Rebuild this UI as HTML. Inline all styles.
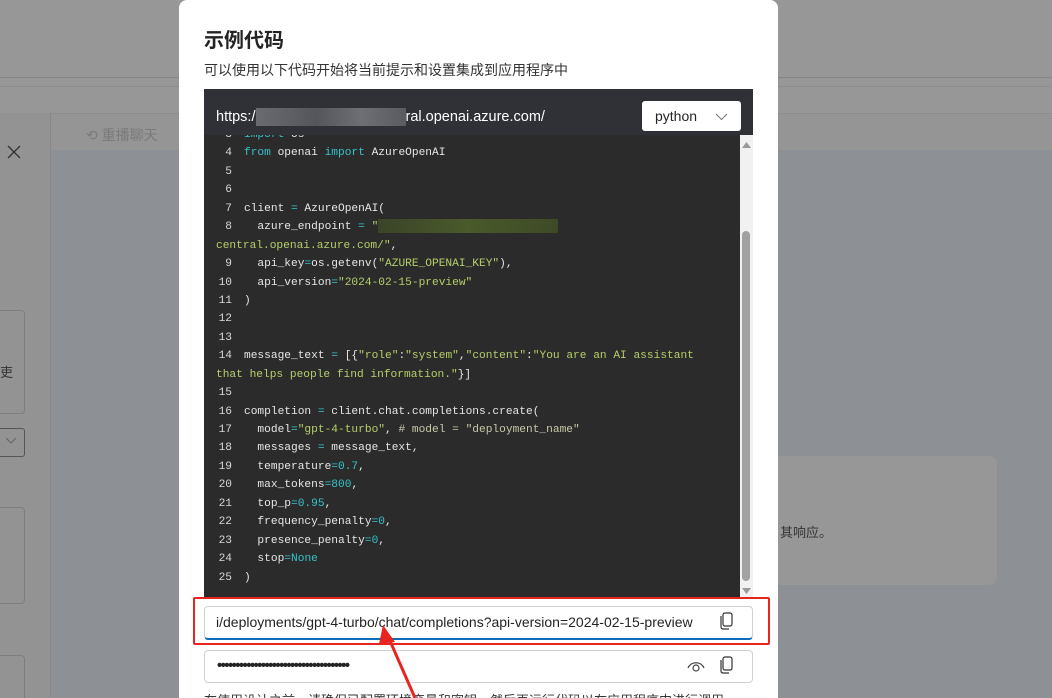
<!DOCTYPE html>
<html><head><meta charset="utf-8">
<style>
*{margin:0;padding:0;box-sizing:border-box}
html,body{width:1052px;height:698px;overflow:hidden}
body{position:relative;background:#8d9094;font-family:"Liberation Sans","Noto Sans CJK SC",sans-serif}
.abs{position:absolute}
.code{font-family:"Liberation Mono","DejaVu Sans Mono",monospace;font-size:11.2px;color:#e6e6e6;white-space:pre;line-height:18.43px}
.n{display:inline-block;width:16px;text-align:right;margin-right:12px;color:#d8d8d8}
.k{color:#36c2c9}.s{color:#b4cf6a}.c{color:#36c2c9}.cm{color:#c8c8a8}
</style></head><body>
<div class="abs" style="left:0;top:0;width:1052px;height:77px;background:#979797"></div>
<div class="abs" style="left:0;top:77px;width:1052px;height:1px;background:#858585"></div>
<div class="abs" style="left:0;top:78px;width:1052px;height:35px;background:#979797"></div>
<div class="abs" style="left:0;top:86px;width:1052px;height:1px;background:#8c8c8c"></div>
<div class="abs" style="left:0;top:113px;width:50px;height:585px;background:#939393"></div>
<div class="abs" style="left:50px;top:113px;width:1002px;height:37px;background:#959595;border-top:1px solid #8c8c8c"></div>
<div class="abs" style="left:50px;top:113px;width:1px;height:585px;background:#888"></div>
<div class="abs" style="left:86px;top:125px;font-size:14px;color:#7a7a7a">⟲ 重播聊天</div>
<svg class="abs" style="left:7px;top:145px" width="14" height="14"><path d="M1 1L13 13M13 1L1 13" stroke="#333" stroke-width="1.3"/></svg>
<div class="abs" style="left:-10px;top:310px;width:35px;height:104px;border:1px solid #7e7e7e;border-radius:4px"></div>
<div class="abs" style="left:0;top:362px;font-size:13px;color:#333">吏</div>
<div class="abs" style="left:-10px;top:428px;width:35px;height:29px;border:1px solid #555;border-radius:3px"></div>
<svg class="abs" style="left:5px;top:437px" width="12" height="8"><path d="M1 1L6 6L11 1" stroke="#666" fill="none"/></svg>
<div class="abs" style="left:-10px;top:507px;width:35px;height:97px;border:1px solid #7e7e7e;border-radius:4px"></div>
<div class="abs" style="left:-10px;top:655px;width:35px;height:60px;border:1px solid #7e7e7e;border-radius:4px"></div>
<div class="abs" style="left:760px;top:456px;width:237px;height:129px;background:#979797;border-radius:8px"></div>
<div class="abs" style="left:780px;top:522px;font-size:13px;color:#333">其响应。</div>
<!-- modal -->
<div class="abs" style="left:179px;top:0;width:599px;height:720px;background:#fff;border-radius:8px"></div>
<div class="abs" style="left:204px;top:24px;font-size:20px;font-weight:bold;color:#242424">示例代码</div>
<div class="abs" style="left:204px;top:60px;font-size:14px;color:#333">可以使用以下代码开始将当前提示和设置集成到应用程序中</div>
<div class="abs" style="left:204px;top:89px;width:549px;height:46px;background:#303136"></div>
<div class="abs" style="left:216px;top:108px;font-size:14.5px;color:#fff">https:/<span style="display:inline-block;width:150px;height:18px;vertical-align:middle;background:linear-gradient(90deg,#6a6b70,#55565b 40%,#6e6f74 70%,#5a5b60)"></span>ral.openai.azure.com/</div>
<div class="abs" style="left:642px;top:101px;width:99px;height:30px;background:#fff;border-radius:3px;font-size:14px;color:#242424;padding:7px 0 0 13px">python</div>
<svg class="abs" style="left:715px;top:113px" width="13" height="8"><path d="M1 1L6.5 6.5L12 1" stroke="#777" fill="none"/></svg>
<div class="abs" style="left:204px;top:135px;width:536px;height:462px;background:#2b2b2b"></div>
<div class="abs" style="left:740px;top:135px;width:13px;height:462px;background:#f1f1f1"></div>
<div class="abs" style="left:742px;top:231px;width:8px;height:350px;background:#a1a1a1;border-radius:4px"></div>
<svg class="abs" style="left:742px;top:141px" width="9" height="8"><path d="M0 7L4.5 1L9 7Z" fill="#999"/></svg>
<svg class="abs" style="left:742px;top:587px" width="9" height="8"><path d="M0 1L4.5 7L9 1Z" fill="#999"/></svg>
<div class="abs code" style="left:216px;top:126px;height:471px;width:524px;overflow:hidden;clip-path:inset(9px 0 0 0)"><span class="n">3</span><span class="k">import</span> os
<span class="n">4</span><span class="k">from</span> openai <span class="k">import</span> AzureOpenAI
<span class="n">5</span>
<span class="n">6</span>
<span class="n">7</span>client <span class="c">=</span> AzureOpenAI(
<span class="n">8</span>  azure_endpoint <span class="c">=</span> <span class="s">"</span><span style="display:inline-block;width:180px;height:14px;vertical-align:middle;background:linear-gradient(90deg,#3b4429,#4a5a2a 50%,#3e4a26)"></span>
<span class="s">central.openai.azure.com/"</span>,
<span class="n">9</span>  api_key<span class="c">=</span>os.getenv(<span class="s">"AZURE_OPENAI_KEY"</span>),
<span class="n">10</span>  api_version<span class="c">=</span><span class="s">"2024-02-15-preview"</span>
<span class="n">11</span>)
<span class="n">12</span>
<span class="n">13</span>
<span class="n">14</span>message_text <span class="c">=</span> [{<span class="s">"role"</span>:<span class="s">"system"</span>,<span class="s">"content"</span>:<span class="s">"You are an AI assistant</span>
<span class="s">that helps people find information."</span>}]
<span class="n">15</span>
<span class="n">16</span>completion <span class="c">=</span> client.chat.completions.create(
<span class="n">17</span>  model<span class="c">=</span><span class="s">"gpt-4-turbo"</span>, <span class="cm"># model = "deployment_name"</span>
<span class="n">18</span>  messages <span class="c">=</span> message_text,
<span class="n">19</span>  temperature<span class="c">=0.7</span>,
<span class="n">20</span>  max_tokens<span class="c">=800</span>,
<span class="n">21</span>  top_p<span class="c">=0.95</span>,
<span class="n">22</span>  frequency_penalty<span class="c">=0</span>,
<span class="n">23</span>  presence_penalty<span class="c">=0</span>,
<span class="n">24</span>  stop<span class="c">=None</span>
<span class="n">25</span>)</div>
<!-- inputs -->
<div class="abs" style="left:204px;top:606px;width:549px;height:34px;border:1px solid #d1d1d1;border-bottom:2px solid #0f6cbd;border-radius:4px;font-size:14px;color:#242424;padding:7px 0 0 11px">i/deployments/gpt-4-turbo/chat/completions?api-version=2024-02-15-preview</div>
<svg class="abs" style="left:719px;top:612px" width="16" height="18"><rect x="4" y="1" width="9" height="13" rx="2" fill="none" stroke="#333" stroke-width="1.2"/><path d="M2 4V15a2 2 0 0 0 2 2H10" fill="none" stroke="#333" stroke-width="1.2"/></svg>
<div class="abs" style="left:193px;top:597px;width:577px;height:48px;border:2px solid #e8241e;border-radius:2px"></div>
<div class="abs" style="left:204px;top:650px;width:549px;height:33px;border:1px solid #d1d1d1;border-radius:4px"></div>
<div class="abs" style="left:217px;top:657px;font-size:15px;color:#242424;letter-spacing:-1.6px;font-weight:bold">••••••••••••••••••••••••••••••••••••</div>
<svg class="abs" style="left:687px;top:659px" width="18" height="14"><path d="M1 9C4 2 14 2 17 9" fill="none" stroke="#444" stroke-width="1.2"/><circle cx="9" cy="9" r="3" fill="none" stroke="#444" stroke-width="1.2"/></svg>
<svg class="abs" style="left:719px;top:656px" width="16" height="18"><rect x="4" y="1" width="9" height="13" rx="2" fill="none" stroke="#333" stroke-width="1.2"/><path d="M2 4V15a2 2 0 0 0 2 2H10" fill="none" stroke="#333" stroke-width="1.2"/></svg>
<div class="abs" style="left:204px;top:690px;font-size:13px;color:#333;white-space:nowrap">在使用设计之前，请确保已配置环境变量和密钥，然后再运行代码以在应用程序中进行调用</div>
<svg class="abs" style="left:370px;top:620px" width="60" height="78"><line x1="45" y1="78" x2="17" y2="14" stroke="#e8241e" stroke-width="3"/><polygon points="13,5 25,22 9,24" fill="#e8241e"/></svg>
</body></html>
